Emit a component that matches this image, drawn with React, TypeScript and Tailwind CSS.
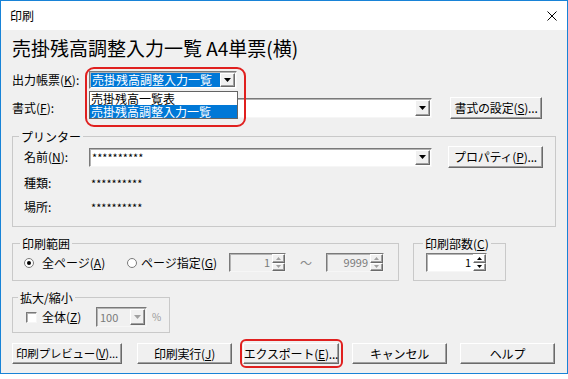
import React from 'react';

const sunken =
  'border border-t-[#7a7a7a] border-l-[#7a7a7a] border-b-[#f6f6f6] border-r-[#f6f6f6] shadow-[inset_1px_1px_0_#b4b4b4]';
const raised =
  'border border-t-white border-l-white border-b-[#6a6a6a] border-r-[#6a6a6a] shadow-[inset_-1px_-1px_0_#a0a0a0]';

function DropBtn() {
  return (
    <div className={`w-[15px] h-full bg-[#f0f0f0] flex items-center justify-center ${raised}`}>
      <svg width="7" height="4" viewBox="0 0 7 4">
        <path d="M0 0h7L3.5 4z" fill="#000" />
      </svg>
    </div>
  );
}

function Button({ children, className = '' }: { children: React.ReactNode; className?: string }) {
  return (
    <div className={`h-[21px] bg-[#f0f0f0] flex items-center justify-center leading-none whitespace-nowrap tracking-[-0.2px] ${raised} ${className}`}>
      {children}
    </div>
  );
}

function Spin({ value, disabled, className = '' }: { value: string; disabled?: boolean; className?: string }) {
  const arrow = disabled ? '#a0a0a0' : '#000';
  return (
    <div className={`h-[19px] flex ${sunken} ${disabled ? 'bg-[#f0f0f0] text-[#7a7a7a]' : 'bg-white text-black'} ${className}`}>
      <div className="flex-1 text-right pr-[2px] text-[11px] leading-[17px]">{value}</div>
      <div className="w-[13px] flex flex-col">
        <div className={`flex-1 flex items-center justify-center ${raised}`}>
          <svg width="5" height="3" viewBox="0 0 5 3">
            <path d="M0 3h5L2.5 0z" fill={arrow} />
          </svg>
        </div>
        <div className={`flex-1 flex items-center justify-center ${raised}`}>
          <svg width="5" height="3" viewBox="0 0 5 3">
            <path d="M0 0h5L2.5 3z" fill={arrow} />
          </svg>
        </div>
      </div>
    </div>
  );
}

function Group({ label, className = '', legendClass = 'ml-[6px]', children }: {
  label: React.ReactNode;
  className?: string;
  legendClass?: string;
  children?: React.ReactNode;
}) {
  return (
    <div className={`border border-[#c9c9c9] ${className}`}>
      <div className={`-mt-[8px] w-fit px-[2px] bg-[#f0f0f0] leading-[15px] ${legendClass}`}>{label}</div>
      {children}
    </div>
  );
}

function Radio({ checked }: { checked?: boolean }) {
  return (
    <div className="w-[10px] h-[10px] rounded-full border border-[#7a7a7a] bg-white flex items-center justify-center shrink-0">
      {checked && <div className="w-[4px] h-[4px] rounded-full bg-black" />}
    </div>
  );
}

export default function App() {
  return (
    <div className="w-[568px] h-[379px] bg-white font-['Noto_Sans_CJK_JP',sans-serif] text-[12px] text-black">
      <div className="relative w-[568px] h-[374px] border border-[#1883d7] bg-[#f0f0f0] flex flex-col">
        {/* title bar */}
        <div className="h-[29px] shrink-0 bg-white flex items-center justify-between pl-[9px] pr-[10px]">
          <span className="leading-none">印刷</span>
          <svg width="10" height="10" viewBox="0 0 10 10">
            <path d="M0.5 0.5l9 9M9.5 0.5l-9 9" stroke="#000" strokeWidth="1" />
          </svg>
        </div>

        <div className="flex flex-col pl-[11px]">
          <div className="h-[34px] flex items-center text-[19px] leading-none">売掛残高調整入力一覧 A4単票(横)</div>

          {/* 出力帳票 */}
          <div className="mt-[7px] h-[18px] flex items-center">
            <div className="w-[77px] leading-none">出力帳票(<u>K</u>):</div>
            <div className={`relative w-[148px] h-[18px] bg-white flex p-[1px] ${sunken}`}>
              <div className="w-[129px] bg-[#0078d7] text-white leading-[14px] px-[1px] whitespace-nowrap">売掛残高調整入力一覧</div>
              <div className="ml-auto">
                <DropBtn />
              </div>
              <div className="absolute left-[-1px] top-[19px] w-[149px] border border-[#646464] bg-white flex flex-col z-10">
                <div className="h-[13px] leading-[13px] px-[1px] whitespace-nowrap">売掛残高一覧表</div>
                <div className="h-[13px] leading-[13px] px-[1px] bg-[#0078d7] text-white whitespace-nowrap">売掛残高調整入力一覧</div>
              </div>
            </div>
          </div>

          {/* 書式 */}
          <div className="mt-[8px] h-[22px] flex items-center">
            <div className="w-[77px] leading-none">書式(<u>F</u>):</div>
            <div className={`w-[343px] h-[20px] bg-white flex justify-end p-[1px] ${sunken}`}>
              <DropBtn />
            </div>
            <Button className="ml-[18px] w-[92px] h-[22px]">書式の設定(<u>S</u>)...</Button>
          </div>

          {/* プリンター */}
          <Group label="プリンター" className="mt-[17px] w-[544px] h-[91px]">
            <div className="mt-[2px] h-[22px] flex items-center pl-[11px]">
              <div className="w-[65px] leading-none">名前(<u>N</u>):</div>
              <div className={`w-[343px] h-[19px] bg-white flex p-[1px] ${sunken}`}>
                <div className="flex-1 leading-[15px] px-[1px] text-[11px]">**********</div>
                <DropBtn />
              </div>
              <Button className="ml-[16px] w-[95px] h-[22px]">プロパティ(<u>P</u>)...</Button>
            </div>
            <div className="mt-[7px] h-[16px] flex items-center pl-[11px]">
              <div className="w-[67px] leading-none">種類:</div>
              <div className="leading-none text-[11px]">**********</div>
            </div>
            <div className="mt-[8px] h-[16px] flex items-center pl-[11px]">
              <div className="w-[67px] leading-none">場所:</div>
              <div className="leading-none text-[11px]">**********</div>
            </div>
          </Group>

          {/* 印刷範囲 / 印刷部数 */}
          <div className="mt-[16px] flex items-start">
            <Group label="印刷範囲" className="w-[387px] h-[38px]" legendClass="ml-[7px]">
              <div className="mt-[2px] h-[19px] flex items-center">
                <div className="ml-[11px]">
                  <Radio checked />
                </div>
                <div className="ml-[8px] w-[85px] leading-none">全ページ(<u>A</u>)</div>
                <Radio />
                <div className="ml-[4px] w-[88px] leading-none">ページ指定(<u>G</u>)</div>
                <Spin value="1" disabled className="w-[57px]" />
                <div className="w-[40px] text-center text-[#8a8a8a] leading-none">～</div>
                <Spin value="9999" disabled className="w-[58px]" />
              </div>
            </Group>
            <Group label={<>印刷部数(<u>C</u>)</>} className="ml-[14px] w-[93px] h-[38px]" legendClass="ml-[9px]">
              <div className="mt-[2px] h-[19px] flex items-center pl-[12px]">
                <Spin value="1" className="w-[61px]" />
              </div>
            </Group>
          </div>

          {/* 拡大/縮小 */}
          <Group label="拡大/縮小" className="mt-[16px] w-[158px] h-[36px]" legendClass="ml-[5px]">
            <div className="mt-[2px] h-[20px] flex items-center">
              <div className={`ml-[13px] w-[11px] h-[11px] bg-white ${sunken}`} />
              <div className="ml-[5px] w-[54px] leading-none">全体(<u>Z</u>)</div>
              <div className={`w-[51px] h-[20px] bg-[#f0f0f0] flex p-[1px] ${sunken}`}>
                <div className="flex-1 text-[#7a7a7a] text-[11px] leading-[16px] pl-[2px]">100</div>
                <div className={`w-[15px] h-full flex items-center justify-center ${raised}`}>
                  <svg width="7" height="4" viewBox="0 0 7 4">
                    <path d="M0 0h7L3.5 4z" fill="#a0a0a0" />
                  </svg>
                </div>
              </div>
              <div className="ml-[5px] text-[#9a9a9a] text-[10px] leading-none">%</div>
            </div>
          </Group>

          {/* buttons */}
          <div className="mt-[10px] flex items-center">
            <Button className="w-[110px] text-[11.5px]">印刷プレビュー(<u>V</u>)...</Button>
            <Button className="ml-[15px] w-[95px]">印刷実行(<u>J</u>)</Button>
            <Button className="ml-[11px] w-[96px]">エクスポート(<u>E</u>)...</Button>
            <Button className="ml-[13px] w-[95px]">キャンセル</Button>
            <Button className="ml-[13px] w-[95px]">ヘルプ</Button>
          </div>
        </div>

        {/* red highlight marks */}
        <div className="absolute left-[84px] top-[66px] w-[161px] h-[60px] border-2 border-[#e0201f] rounded-[9px] pointer-events-none z-20" />
        <div className="absolute left-[239px] top-[338px] w-[103px] h-[29px] border-2 border-[#e0201f] rounded-[6px] pointer-events-none z-20" />
      </div>
    </div>
  );
}
